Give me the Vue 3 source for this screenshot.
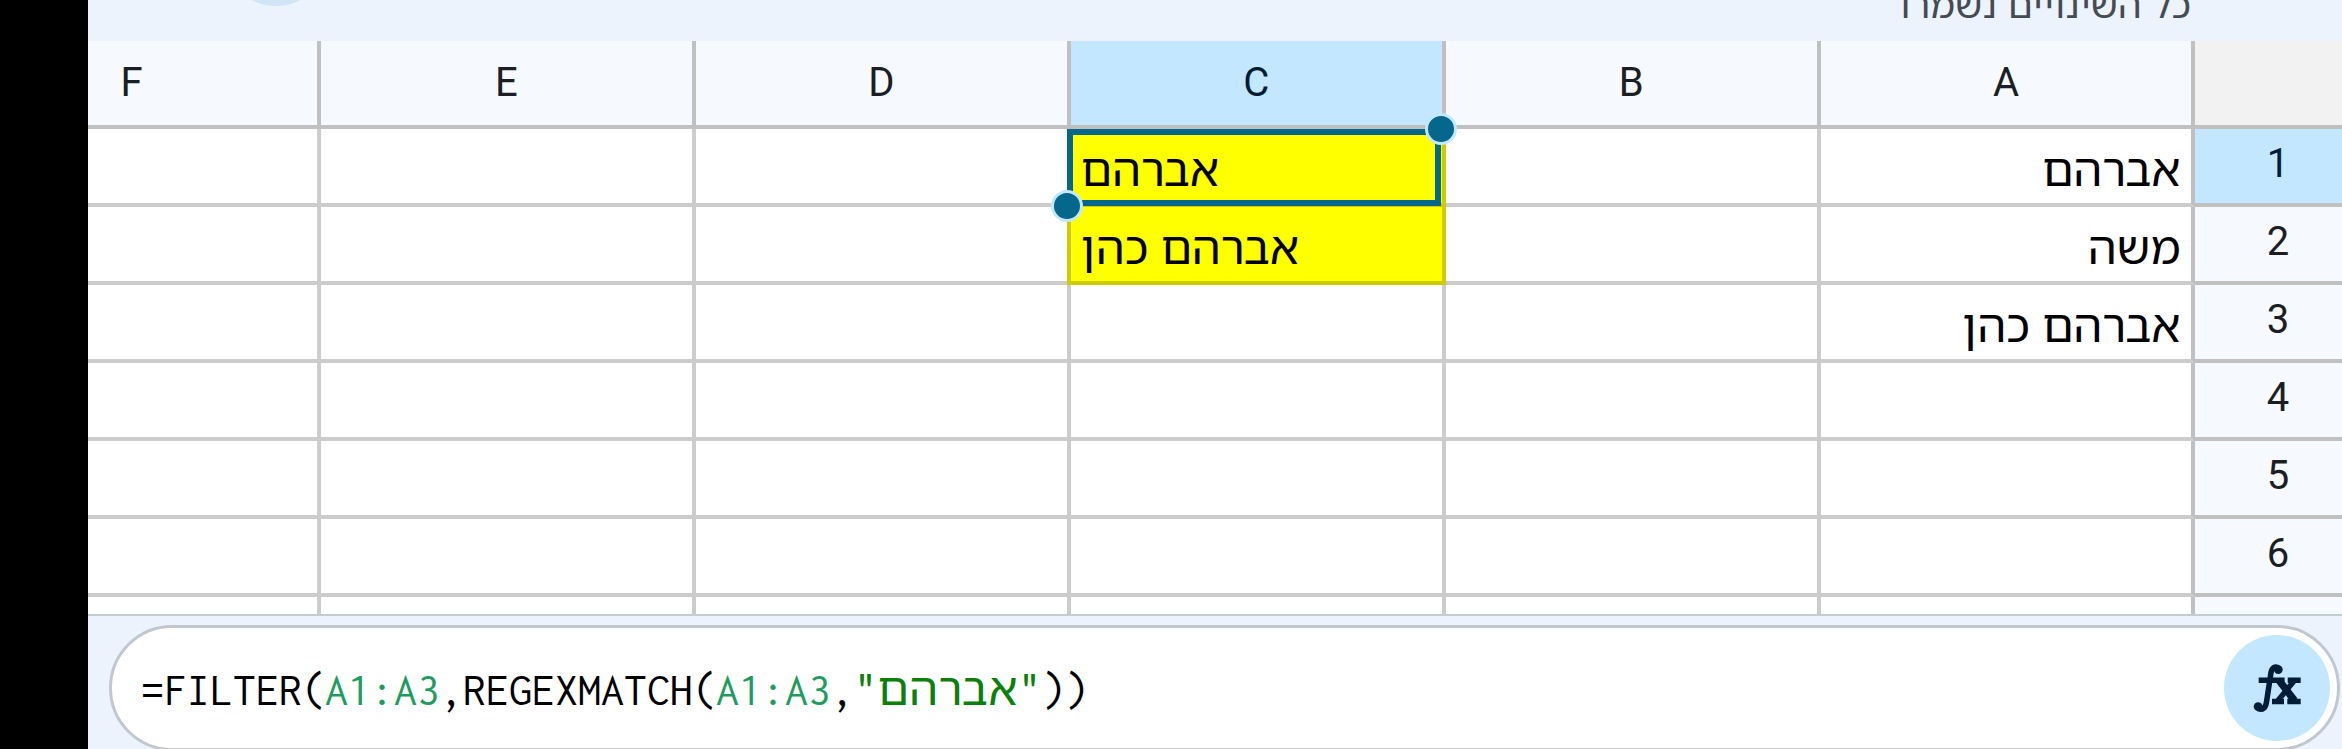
<script setup>
import { ref } from 'vue'

// The sheet runs right to left, so the columns are listed from F back to A
const columns = ['F', 'E', 'D', 'C', 'B', 'A']
const rows = [1, 2, 3, 4, 5, 6, 7]

const cells = {
  A1: 'אברהם',
  A2: 'משה',
  A3: 'אברהם כהן',
  C1: 'אברהם',
  C2: 'אברהם כהן',
}

const filled = ['C1', 'C2']
const selected = ref('C1')

const formula = [
  { text: '=FILTER(', type: 'plain' },
  { text: 'A1:A3', type: 'range' },
  { text: ',REGEXMATCH(', type: 'plain' },
  { text: 'A1:A3', type: 'range' },
  { text: ',', type: 'plain' },
  { text: '"אברהם"', type: 'string' },
  { text: '))', type: 'plain' },
]
</script>

<template>
  <div class="screen">
    <div class="notch"></div>
    <main class="app">
      <header class="topbar">
        <span class="avatar"></span>
        <span class="status" dir="rtl">כל השינויים נשמרו</span>
      </header>

      <section class="sheet">
        <div class="row head">
          <div
            v-for="col in columns"
            :key="col"
            class="col-head"
            :class="{ active: selected[0] === col }"
          >
            {{ col }}
          </div>
          <div class="corner"></div>
        </div>
        <div v-for="row in rows" :key="row" class="row">
          <div
            v-for="col in columns"
            :key="col"
            class="cell"
            :class="{ filled: filled.includes(col + row), left: col === 'C' }"
            @click="selected = col + row"
          >
            <bdi>{{ cells[col + row] }}</bdi>
            <div v-if="selected === col + row" class="selection">
              <i class="handle start"></i>
              <i class="handle end"></i>
            </div>
          </div>
          <div class="row-head" :class="{ active: selected.slice(1) === String(row) }">
            {{ row < 7 ? row : '' }}
          </div>
        </div>
      </section>

      <footer class="formula-bar">
        <div class="pill">
          <code class="formula"><span
            v-for="(part, i) in formula"
            :key="i"
            :class="part.type"
          >{{ part.text }}</span></code>
          <button class="fx" type="button" aria-label="fx">
            <svg viewBox="0 0 64 64" width="64" height="64">
              <g fill="none" stroke="#001d35" stroke-width="5.5">
                <path d="M34 14.5C30.5 11.5 26.8 13.5 26 18.5L21.5 48C20.6 54 17.5 56.8 13 54.5" />
                <path d="M13.7 26.2H39.6M42.7 26.2H55.7M27 47.4H39M42.3 47.4H55.7" />
                <path d="M34.5 27L49.5 46.5" stroke-width="7.4" />
                <path d="M49 27L33 46.5" stroke-width="5.4" />
              </g>
              <circle cx="33.3" cy="15.6" r="4.4" fill="#001d35" />
              <circle cx="13.1" cy="52.6" r="4.4" fill="#001d35" />
            </svg>
          </button>
        </div>
      </footer>
    </main>
  </div>
</template>

<style>
body {
  overflow: hidden;
}
</style>

<style scoped>
.screen {
  display: flex;
  width: 2342px;
  height: 749px;
  overflow: hidden;
  background: #ecf3fc;
  font-family: Roboto, 'Noto Sans Hebrew', sans-serif;
}
.notch {
  flex: 0 0 88px;
  background: #000;
}
.app {
  flex: 1;
  min-width: 0;
  display: flex;
  flex-direction: column;
  overflow: hidden;
}
.topbar {
  flex: 0 0 40.5px;
  display: flex;
  justify-content: space-between;
  align-items: flex-end;
  padding: 0 151px 0 136px;
  overflow: hidden;
}
.avatar {
  width: 104px;
  height: 104px;
  margin-bottom: 34.5px;
  border-radius: 50%;
  background: #d0e5f5;
}
.status {
  margin-bottom: 15px;
  font-family: 'Noto Sans Hebrew', sans-serif;
  font-size: 37.7px;
  line-height: 44px;
  color: #444b52;
  white-space: nowrap;
}
.sheet {
  flex: 0 0 573.5px;
  overflow: hidden;
}
.row {
  display: grid;
  grid-template-columns: repeat(6, 374.9px) 165px;
  grid-template-rows: 100%;
  width: 2415px;
  height: 78px;
  margin-left: -141.9px;
}
.row.head {
  height: 88.5px;
}
.col-head,
.corner,
.row-head,
.cell {
  box-sizing: border-box;
  border-bottom: 4px solid #c0c0c0;
}
.col-head,
.row-head {
  display: flex;
  justify-content: center;
  background: #f6f9fe;
  color: #1b1f23;
  font-size: 40px;
}
.col-head {
  align-items: center;
  border-right: 4px solid #c0c0c0;
}
.corner {
  background: #f2f2f2;
}
.row-head {
  line-height: 70px;
}
.active {
  background: #c2e7ff;
  color: #001d35;
}
.cell {
  position: relative;
  padding-left: 10px;
  border-right: 4px solid #ccc;
  border-bottom-color: #ccc;
  background: #fff;
  color: #000;
  font-family: 'Noto Sans Hebrew', sans-serif;
  font-size: 45.9px;
  line-height: 79px;
  text-align: right;
  white-space: nowrap;
}
.cell:nth-child(6) {
  padding-right: 11px;
  border-right-color: #c0c0c0;
}
.cell.left {
  text-align: left;
}
.cell.filled {
  border-color: #cc0;
  background: #ff0;
}
/* Yellow bleeds over the gridline shared with the next column */
.cell.filled::before {
  content: '';
  position: absolute;
  inset: 0 auto -4px -4px;
  width: 4px;
  background: #cc0;
}
.selection {
  position: absolute;
  z-index: 2;
  inset: 0 1px -3px -4px;
  border: 6px solid #04678b;
}
.handle {
  position: absolute;
  box-sizing: border-box;
  width: 32px;
  height: 32px;
  border: 3px solid #c2e7ff;
  border-radius: 50%;
  background: #04678b;
}
.handle.start {
  top: -22px;
  right: -22px;
}
.handle.end {
  bottom: -22px;
  left: -22px;
}
.formula-bar {
  flex: 1;
  padding: 8.5px 2px 0 21px;
  border-top: 2px solid #c4ccd4;
}
.pill {
  display: flex;
  justify-content: space-between;
  align-items: center;
  box-sizing: border-box;
  height: 126px;
  padding: 0 7px 0 29px;
  border: 3px solid #c1c7ce;
  border-radius: 63px;
  background: #fff;
}
.formula {
  margin-top: 4px;
  font-family: Inconsolata, 'Noto Sans Hebrew', monospace;
  font-size: 46px;
  line-height: 60px;
  color: #000;
  white-space: pre;
}
.range {
  color: #1e9c60;
}
.string {
  color: #0b800b;
  letter-spacing: 0.4px;
}
.fx {
  display: flex;
  justify-content: center;
  align-items: center;
  width: 106px;
  height: 106px;
  padding: 0 0 3px;
  box-sizing: border-box;
  border: 0;
  border-radius: 50%;
  background: #c2e7ff;
  cursor: pointer;
}
</style>
